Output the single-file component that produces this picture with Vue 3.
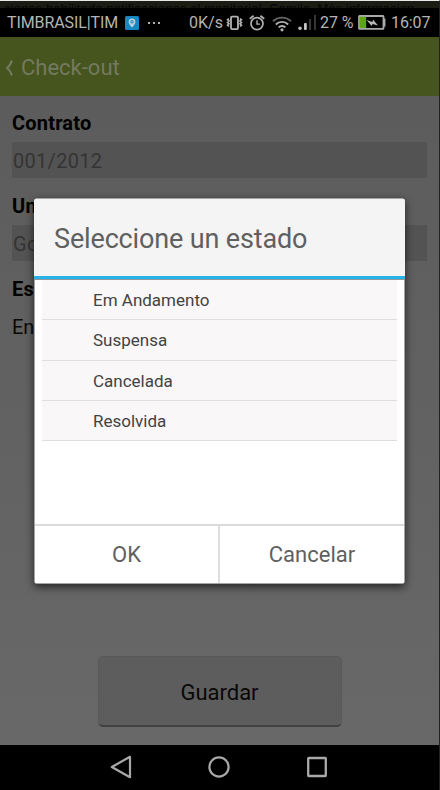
<script setup>
const states = ['Em Andamento', 'Suspensa', 'Cancelada', 'Resolvida']
</script>

<template>
  <div class="screen">
    <div class="behind"><span>ciones habilitado notificaciones al monitorial. Camila. Más informacion</span></div>
    <header class="status">
      <span class="carrier">TIMBRASIL|TIM</span>
      <svg class="pin" viewBox="0 0 14 14"><rect width="14" height="14" rx="1.5" fill="#1787c2" /><path d="M7 11.6C5.8 10 3.6 8 3.6 5.9a3.4 3.4 0 0 1 6.8 0C10.4 8 8.2 10 7 11.6z" fill="#b9d0d9" /><circle cx="7" cy="5.8" r="1.7" fill="#1787c2" /><circle cx="7" cy="5.8" r=".8" fill="#b9d0d9" /></svg>
      <svg class="dots" viewBox="0 0 12 4" fill="#b0b0b0"><rect x="0" y="1" width="2" height="2" /><rect x="5" y="1" width="2" height="2" /><rect x="10" y="1" width="2" height="2" /></svg>
      <span class="speed">0K/s</span>
      <svg class="vibrate" viewBox="0 0 17 16" fill="none" stroke="#b2b2b2"><rect x="5" y="1.7" width="7" height="12.4" rx="1" stroke-width="1.8" /><path d="M3 3.5l-1.5 1.2L3 6 1.5 7.4 3 8.8 1.5 10.2 3 11.5M14 3.5l1.5 1.2L14 6l1.5 1.4L14 8.8l1.5 1.4L14 11.5" stroke-width="1.6" /></svg>
      <svg class="alarm" viewBox="0 0 16 16" fill="none" stroke="#b2b2b2"><circle cx="8" cy="8.6" r="6" stroke-width="1.7" /><path d="M.8 3.8l3.8-3M15.2 3.8l-3.8-3" stroke-width="1.8" /><path d="M8 5.2v3.9h3" stroke-width="1.4" /></svg>
      <svg class="wifi" viewBox="0 0 20 16" fill="none" stroke="#b2b2b2" stroke-width="1.9"><path d="M1 5.2a13 13 0 0 1 18 0" stroke="#666" /><path d="M3.8 8.5a8.7 8.7 0 0 1 12.4 0M6.6 11.4a4.8 4.8 0 0 1 6.8 0" /><circle cx="10" cy="13.8" r="1.6" fill="#b2b2b2" stroke="none" /></svg>
      <svg class="signal" viewBox="0 0 19 16"><circle cx="2" cy="13.2" r="1.8" fill="#b8b8b8" /><rect x="6" y="8" width="2.8" height="7" rx="1" fill="#c4c4c4" /><rect x="11" y="4" width="2" height="11" fill="#353535" /><rect x="16" y="0" width="2" height="15" fill="#353535" /></svg>
      <span class="percent">27 %</span>
      <svg class="battery" viewBox="0 0 28 15"><rect x="1" y="1" width="24.5" height="12.8" rx=".6" fill="none" stroke="#aaa" stroke-width="1.8" /><rect x="1.8" y="1.8" width="6.4" height="11.2" fill="#5da419" /><path d="M26.7 3.5v8" stroke="#aaa" stroke-width="1.5" /><path d="M8.5 5l6 2 .5-2.5 5 6-5.5-1.5-.8 2z" fill="#b6b6b6" /></svg>
      <span class="clock">16:07</span>
    </header>
    <div class="appbar">
      <svg viewBox="0 0 8 18" fill="none"><path d="M6.8 1.5Q5.8 6 2 9q3.8 3 4.8 7.5" stroke="#747a60" stroke-width="2.1" /></svg>
      <span>Check-out</span>
    </div>
    <main>
      <label>Contrato</label>
      <div class="field">001/2012</div>
      <label>Unidade</label>
      <div class="field">Goiania</div>
      <label>Estado</label>
      <div class="value">En Andamento</div>
      <button class="save">Guardar</button>
    </main>
    <nav>
      <svg viewBox="0 0 24 24" fill="none" stroke="#a9a9a9" stroke-width="2.2"><path d="M21 1.8v20.4L2.8 12z" stroke-linejoin="round" /></svg>
      <svg viewBox="0 0 24 24" fill="none" stroke="#a9a9a9" stroke-width="2.2"><circle cx="12" cy="12" r="9.6" /></svg>
      <svg viewBox="0 0 24 24" fill="none" stroke="#a9a9a9" stroke-width="2.3"><rect x="3.2" y="3" width="17.6" height="18" rx=".6" /></svg>
    </nav>
    <section class="dialog" role="dialog">
      <h1><span>Seleccione un estado</span></h1>
      <div class="body">
        <ul>
          <li v-for="s in states" :key="s"><span>{{ s }}</span></li>
        </ul>
      </div>
      <div class="actions">
        <button class="ok">OK</button>
        <button class="cancel">Cancelar</button>
      </div>
    </section>
  </div>
</template>

<style>
body { margin: 0; }
</style>

<style scoped>
* { box-sizing: border-box; }
.screen { position: relative; width: 440px; height: 790px; display: flex; flex-direction: column; overflow: hidden; font-family: Roboto, sans-serif; background: #626262; border-right: 1px solid #222; border-top: 1px solid #e8e8e8; }
.behind { height: 7px; background: #1b1d15; color: #050505; overflow: hidden; font: 13px "Liberation Sans", sans-serif; line-height: 14px; white-space: nowrap; padding-left: 4px; flex: none; }
.behind span { display: block; margin-top: 1px; letter-spacing: .1px; }
.status { height: 29px; flex: none; background: #000; color: #b4b4b4; display: flex; align-items: center; padding-left: 7px; font-size: 16px; white-space: nowrap; }
.status svg, .status span { flex: none; }
.carrier { width: 118px; letter-spacing: -.1px; }
.pin { width: 14px; height: 14px; }
.dots { width: 12px; height: 4px; margin-left: 9px; }
.speed { width: 34px; margin-left: 29px; }
.vibrate { width: 17px; height: 16px; margin-left: 3px; }
.alarm { width: 16px; height: 16px; margin-left: 6px; }
.wifi { width: 20px; height: 16px; margin-left: 7px; margin-top: 2px; }
.signal { width: 19px; height: 16px; margin-left: 6px; }
.percent { width: 35px; margin-left: 3px; letter-spacing: -.1px; }
.battery { width: 28px; height: 15px; margin-left: 3px; }
.clock { margin-left: 5px; letter-spacing: -.1px; }
.appbar { height: 59px; flex: none; background: #46541d; color: #747a60; display: flex; align-items: center; gap: 8px; padding: 2px 0 0 5px; font-size: 22px; }
.appbar svg { width: 8px; height: 18px; }
main { height: 649px; flex: none; background: linear-gradient(#5c5c5c, #686868); padding: 12px 12px 0; display: flex; flex-direction: column; }
label { font-size: 20px; letter-spacing: .2px; font-weight: 700; line-height: 30px; height: 34px; color: #000; }
.field { height: 36px; line-height: 39px; margin-bottom: 13px; background: #535353; color: #343434; font-size: 20px; padding-left: 1px; letter-spacing: .3px; }
.value { height: 36px; line-height: 38px; font-size: 20px; color: #080808; }
.save { align-self: center; width: 244px; height: 71px; margin: auto 0 18px; border: 1px solid #595959; border-bottom: 2px solid #414141; border-radius: 5px; background: #5d5d5d; color: #080808; font: 22px Roboto, sans-serif; padding: 2px 0 0; }
nav { height: 45px; flex: none; background: #000; display: flex; align-items: center; justify-content: center; gap: 74px; padding: 0 1px 2px 0; }
nav svg { width: 24px; height: 24px; }
.dialog { position: absolute; left: 34px; top: 197px; width: 371px; height: 386px; display: flex; flex-direction: column; background: #fff; border: 1px solid #a5a5a5; border-radius: 3px; box-shadow: 0 3px 8px rgba(0,0,0,.65); }
h1 { margin: 0 -1px; height: 81px; flex: none; border-bottom: 1px solid #8d9ba0; background: linear-gradient(#f4f4f4 77px, #26b4e8 77px); font-size: 27px; font-weight: 400; letter-spacing: -.15px; color: #606060; padding: 24px 0 0 20px; line-height: 32px; border-radius: 2px 2px 0 0; }
.body { height: 244px; flex: none; padding: 0 7px; }
ul { margin: 0; padding: 0; list-style: none; }
li { height: 40.3px; border-bottom: 1px solid #dfdede; background: #f9f7f8; padding-left: 51px; font-size: 17px; line-height: 40px; color: #434343; }
.actions { flex: 1; display: grid; grid-template-columns: 183px 1fr; border-top: 2px solid #dadada; }
.actions button { border: 0; background: #fff; color: #606060; font: 22px Roboto, sans-serif; padding: 0; }
.actions .cancel { border-left: 2px solid #dedede; }
</style>
